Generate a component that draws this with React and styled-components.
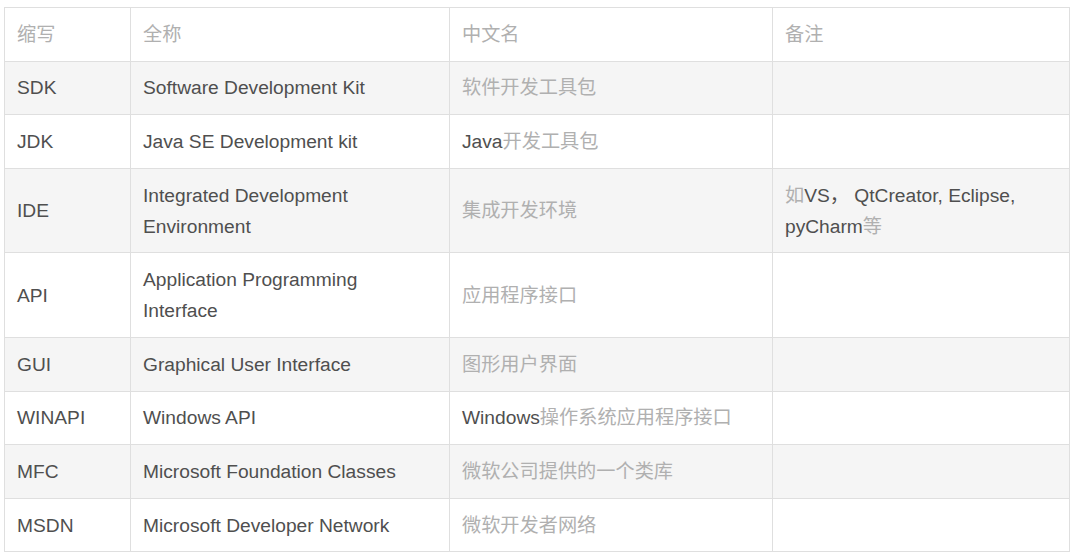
import styled, { createGlobalStyle } from "styled-components";

const GlobalStyle = createGlobalStyle`
  html, body {
    margin: 0;
    padding: 0;
    background: #ffffff;
  }
  body {
    font-family: "Liberation Sans", "Noto Sans CJK SC", Arial, sans-serif;
  }
`;

const Page = styled.div`
  padding: 7px 0 0 4px;
  width: 1080px;
  height: 552px;
  box-sizing: border-box;
  overflow: hidden;
`;

const Table = styled.table`
  width: 1065px;
  border-collapse: collapse;
  table-layout: fixed;
  border: 1px solid #dfdfdf;
  font-size: 19.2px;
  line-height: 31px;
  color: #4f4f4f;
`;

const Col = styled.col`
  width: ${(props) => props.$width}px;
`;

const Row = styled.tr`
  background: ${(props) => (props.$shaded ? "#f5f5f5" : "#ffffff")};
`;

const Cell = styled.td`
  border: 1px solid #dfdfdf;
  padding: 10.8px 20px 10.8px 12px;
  vertical-align: middle;
  text-align: left;
  font-weight: normal;
`;

const HeadCell = styled(Cell).attrs({ as: "th" })`
  color: #b0b0b0;
`;

const Zh = styled.span`
  color: #b0b0b0;
`;

// 中文部分用浅灰色，英文保持深色
const renderText = (text) =>
  text.split(/([\u4e00-\u9fff]+)/).map((part, i) =>
    /[\u4e00-\u9fff]/.test(part) ? <Zh key={i}>{part}</Zh> : part
  );

const widths = [126, 319, 323, 297];

const headers = ["缩写", "全称", "中文名", "备注"];

const rows = [
  ["SDK", "Software Development Kit", "软件开发工具包", ""],
  ["JDK", "Java SE Development kit", "Java开发工具包", ""],
  ["IDE", "Integrated Development Environment", "集成开发环境", "如VS， QtCreator, Eclipse, pyCharm等"],
  ["API", "Application Programming Interface", "应用程序接口", ""],
  ["GUI", "Graphical User Interface", "图形用户界面", ""],
  ["WINAPI", "Windows API", "Windows操作系统应用程序接口", ""],
  ["MFC", "Microsoft Foundation Classes", "微软公司提供的一个类库", ""],
  ["MSDN", "Microsoft Developer Network", "微软开发者网络", ""],
];

const App = () => {
  return (
    <>
      <GlobalStyle />
      <Page>
        <Table>
          <colgroup>
            {widths.map((w, i) => (
              <Col key={i} $width={w} />
            ))}
          </colgroup>
          <thead>
            <Row>
              {headers.map((h) => (
                <HeadCell key={h}>{h}</HeadCell>
              ))}
            </Row>
          </thead>
          <tbody>
            {rows.map((row, idx) => (
              <Row key={row[0]} $shaded={idx % 2 === 0}>
                {row.map((text, j) => (
                  <Cell key={j}>{renderText(text)}</Cell>
                ))}
              </Row>
            ))}
          </tbody>
        </Table>
      </Page>
    </>
  );
};

export default App;
